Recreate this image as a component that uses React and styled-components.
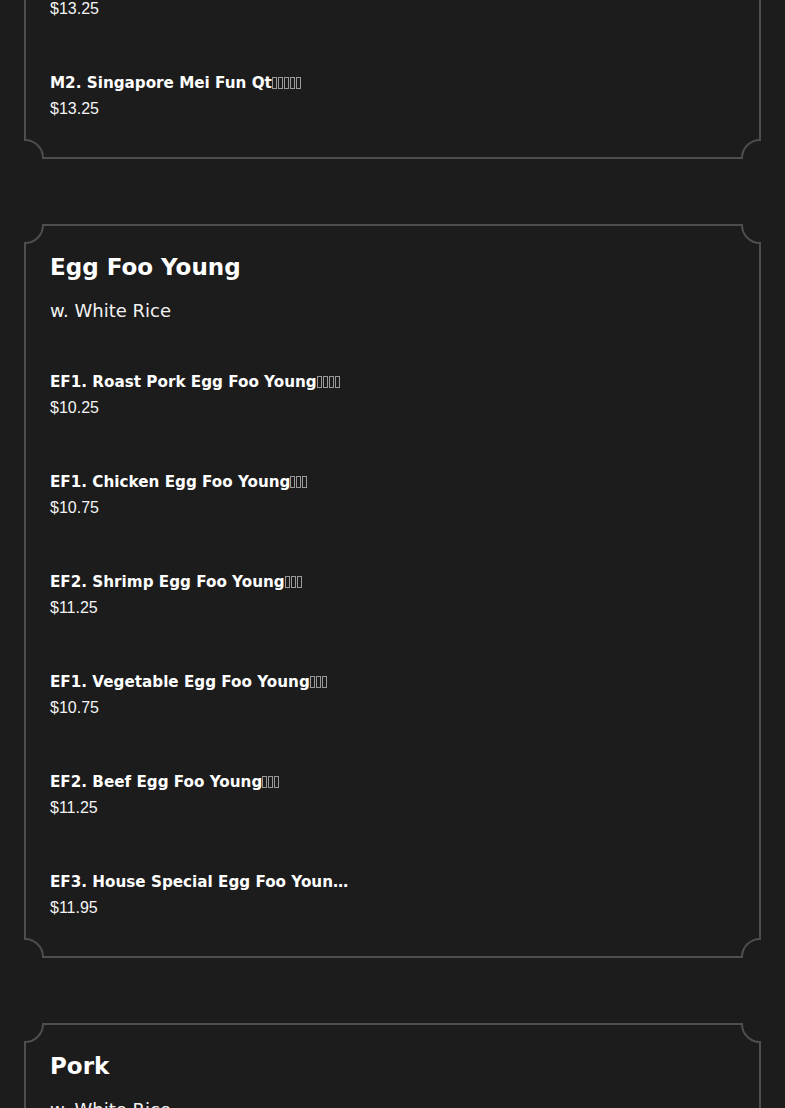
import React from "react";
import styled, { createGlobalStyle } from "styled-components";

const GlobalStyle = createGlobalStyle`
  html, body {
    margin: 0;
    padding: 0;
    background: #1c1c1c;
  }
  body {
    font-family: "DejaVu Sans", sans-serif;
    color: #ffffff;
    overflow: hidden;
  }
`;

const menu = [
  {
    title: "Mei Fun",
    note: "w. White Rice",
    items: [
      { name: "M1. House Special Mei Fun", zh: "本楼米粉", price: "$13.25" },
      { name: "M2. Singapore Mei Fun Qt", zh: "星洲炒米粉", price: "$13.25" }
    ]
  },
  {
    title: "Egg Foo Young",
    note: "w. White Rice",
    items: [
      { name: "EF1. Roast Pork Egg Foo Young", zh: "叉烧芙蓉", price: "$10.25" },
      { name: "EF1. Chicken Egg Foo Young", zh: "鸡芙蓉", price: "$10.75" },
      { name: "EF2. Shrimp Egg Foo Young", zh: "虾芙蓉", price: "$11.25" },
      { name: "EF1. Vegetable Egg Foo Young", zh: "菜芙蓉", price: "$10.75" },
      { name: "EF2. Beef Egg Foo Young", zh: "牛芙蓉", price: "$11.25" },
      { name: "EF3. House Special Egg Foo Young", zh: "本楼芙蓉", price: "$11.95" }
    ]
  },
  {
    title: "Pork",
    note: "w. White Rice",
    items: [{ name: "P1. Roast Pork w. Broccoli", zh: "芥兰叉烧", price: "$12.25" }]
  }
];

export default function App() {
  return (
    <>
      <GlobalStyle />
      <Page>
        {menu.map((section) => (
          <Card key={section.title}>
            <Corner $v="top" $h="left" />
            <Corner $v="top" $h="right" />
            <Corner $v="bottom" $h="left" />
            <Corner $v="bottom" $h="right" />
            <Title>{section.title}</Title>
            <Note>{section.note}</Note>
            <ItemList>
              {section.items.map((item, i) => (
                <Item key={i}>
                  <Name>
                    {item.name}
                    {item.zh.split("").map((ch, j) => (
                      <Tofu key={j}>{ch}</Tofu>
                    ))}
                  </Name>
                  <Price>{item.price}</Price>
                </Item>
              ))}
            </ItemList>
          </Card>
        ))}
      </Page>
    </>
  );
}

const Page = styled.div`
  display: flex;
  flex-direction: column;
  gap: 65px;
  padding: 0 24px;
  margin-top: -175px;
`;

const Card = styled.section`
  position: relative;
  background: #1c1c1c;
  border: 2px solid #4e4e4e;
  padding: 23px 24px 11px;
`;

const Corner = styled.span`
  position: absolute;
  width: 38px;
  height: 38px;
  box-sizing: border-box;
  border-radius: 50%;
  border: 2px solid #4e4e4e;
  background: #1c1c1c;
  ${(p) => p.$v}: -20px;
  ${(p) => p.$h}: -20px;
  clip-path: ${(p) =>
    p.$v === "top"
      ? p.$h === "left"
        ? "inset(18px 0 0 18px)"
        : "inset(18px 18px 0 0)"
      : p.$h === "left"
      ? "inset(0 0 18px 18px)"
      : "inset(0 18px 18px 0)"};
`;

const Title = styled.h2`
  margin: 0;
  font-family: "DejaVu Sans", sans-serif;
  font-weight: 700;
  font-size: 23px;
  line-height: 36px;
  color: #ffffff;
`;

const Note = styled.p`
  margin: 12px 0 0;
  font-family: "DejaVu Sans", sans-serif;
  font-weight: 400;
  font-size: 18px;
  line-height: 27px;
  color: #f2f2f2;
`;

const ItemList = styled.div`
  display: flex;
  flex-direction: column;
  margin-top: 21px;
`;

const Item = styled.div`
  display: flex;
  flex-direction: column;
  padding: 24px 0;
`;

const Name = styled.div`
  max-width: 309px;
  white-space: nowrap;
  overflow: hidden;
  text-overflow: ellipsis;
  font-family: "DejaVu Sans", sans-serif;
  font-weight: 700;
  font-size: 15.2px;
  line-height: 26px;
  color: #ffffff;
`;

const Tofu = styled.span`
  display: inline-block;
  box-sizing: border-box;
  width: 5px;
  height: 12px;
  margin-right: 1px;
  border: 1px solid #9a9a9a;
  overflow: hidden;
  color: transparent;
  font-size: 8px;
  line-height: 10px;
  vertical-align: -1px;
`;

const Price = styled.div`
  font-family: "Liberation Sans", sans-serif;
  font-weight: 400;
  font-size: 16px;
  line-height: 26px;
  color: #f4f4f4;
`;
